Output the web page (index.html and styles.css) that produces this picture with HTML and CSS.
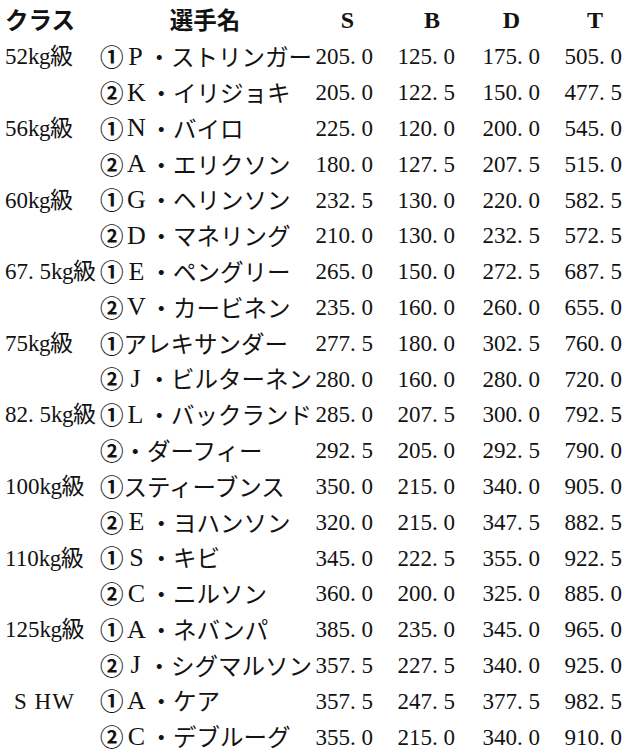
FILE: index.html
```html
<!DOCTYPE html>
<html lang="ja">
<head>
<meta charset="utf-8">
<title>結果</title>
<link rel="stylesheet" href="styles.css">
</head>
<body>
<div class="table">
  <div class="cell hcls">クラス</div>
  <div class="cell hname">選手名</div>
  <div class="cell hnum hs">S</div>
  <div class="cell hnum hb">B</div>
  <div class="cell hnum hd">D</div>
  <div class="cell hnum ht">T</div>

  <div class="cell cls">52<span class="kg">kg</span>級</div>
  <div class="cell name"><span class="mk">①</span><span class="ini">P</span>・ストリンガー</div>
  <div class="cell num">205. 0</div><div class="cell num">125. 0</div><div class="cell num">175. 0</div><div class="cell num">505. 0</div>

  <div class="cell cls"></div>
  <div class="cell name"><span class="mk">②</span><span class="ini">K</span>・イリジョキ</div>
  <div class="cell num">205. 0</div><div class="cell num">122. 5</div><div class="cell num">150. 0</div><div class="cell num">477. 5</div>

  <div class="cell cls">56<span class="kg">kg</span>級</div>
  <div class="cell name"><span class="mk">①</span><span class="ini">N</span>・バイロ</div>
  <div class="cell num">225. 0</div><div class="cell num">120. 0</div><div class="cell num">200. 0</div><div class="cell num">545. 0</div>

  <div class="cell cls"></div>
  <div class="cell name"><span class="mk">②</span><span class="ini">A</span>・エリクソン</div>
  <div class="cell num">180. 0</div><div class="cell num">127. 5</div><div class="cell num">207. 5</div><div class="cell num">515. 0</div>

  <div class="cell cls">60<span class="kg">kg</span>級</div>
  <div class="cell name"><span class="mk">①</span><span class="ini">G</span>・ヘリンソン</div>
  <div class="cell num">232. 5</div><div class="cell num">130. 0</div><div class="cell num">220. 0</div><div class="cell num">582. 5</div>

  <div class="cell cls"></div>
  <div class="cell name"><span class="mk">②</span><span class="ini">D</span>・マネリング</div>
  <div class="cell num">210. 0</div><div class="cell num">130. 0</div><div class="cell num">232. 5</div><div class="cell num">572. 5</div>

  <div class="cell cls">67. 5<span class="kg">kg</span>級</div>
  <div class="cell name"><span class="mk">①</span><span class="ini">E</span>・ペングリー</div>
  <div class="cell num">265. 0</div><div class="cell num">150. 0</div><div class="cell num">272. 5</div><div class="cell num">687. 5</div>

  <div class="cell cls"></div>
  <div class="cell name"><span class="mk">②</span><span class="ini">V</span>・カービネン</div>
  <div class="cell num">235. 0</div><div class="cell num">160. 0</div><div class="cell num">260. 0</div><div class="cell num">655. 0</div>

  <div class="cell cls">75<span class="kg">kg</span>級</div>
  <div class="cell name"><span class="mk">①</span>アレキサンダー</div>
  <div class="cell num">277. 5</div><div class="cell num">180. 0</div><div class="cell num">302. 5</div><div class="cell num">760. 0</div>

  <div class="cell cls"></div>
  <div class="cell name"><span class="mk">②</span><span class="ini">J</span>・ビルターネン</div>
  <div class="cell num">280. 0</div><div class="cell num">160. 0</div><div class="cell num">280. 0</div><div class="cell num">720. 0</div>

  <div class="cell cls">82. 5<span class="kg">kg</span>級</div>
  <div class="cell name"><span class="mk">①</span><span class="ini">L</span>・バックランド</div>
  <div class="cell num">285. 0</div><div class="cell num">207. 5</div><div class="cell num">300. 0</div><div class="cell num">792. 5</div>

  <div class="cell cls"></div>
  <div class="cell name"><span class="mk">②</span>・ダーフィー</div>
  <div class="cell num">292. 5</div><div class="cell num">205. 0</div><div class="cell num">292. 5</div><div class="cell num">790. 0</div>

  <div class="cell cls">100<span class="kg">kg</span>級</div>
  <div class="cell name"><span class="mk">①</span>スティーブンス</div>
  <div class="cell num">350. 0</div><div class="cell num">215. 0</div><div class="cell num">340. 0</div><div class="cell num">905. 0</div>

  <div class="cell cls"></div>
  <div class="cell name"><span class="mk">②</span><span class="ini">E</span>・ヨハンソン</div>
  <div class="cell num">320. 0</div><div class="cell num">215. 0</div><div class="cell num">347. 5</div><div class="cell num">882. 5</div>

  <div class="cell cls">110<span class="kg">kg</span>級</div>
  <div class="cell name"><span class="mk">①</span><span class="ini">S</span>・キビ</div>
  <div class="cell num">345. 0</div><div class="cell num">222. 5</div><div class="cell num">355. 0</div><div class="cell num">922. 5</div>

  <div class="cell cls"></div>
  <div class="cell name"><span class="mk">②</span><span class="ini">C</span>・ニルソン</div>
  <div class="cell num">360. 0</div><div class="cell num">200. 0</div><div class="cell num">325. 0</div><div class="cell num">885. 0</div>

  <div class="cell cls">125<span class="kg">kg</span>級</div>
  <div class="cell name"><span class="mk">①</span><span class="ini">A</span>・ネバンパ</div>
  <div class="cell num">385. 0</div><div class="cell num">235. 0</div><div class="cell num">345. 0</div><div class="cell num">965. 0</div>

  <div class="cell cls"></div>
  <div class="cell name"><span class="mk">②</span><span class="ini">J</span>・シグマルソン</div>
  <div class="cell num">357. 5</div><div class="cell num">227. 5</div><div class="cell num">340. 0</div><div class="cell num">925. 0</div>

  <div class="cell cls shw">S HW</div>
  <div class="cell name"><span class="mk">①</span><span class="ini">A</span>・ケア</div>
  <div class="cell num">357. 5</div><div class="cell num">247. 5</div><div class="cell num">377. 5</div><div class="cell num">982. 5</div>

  <div class="cell cls"></div>
  <div class="cell name"><span class="mk">②</span><span class="ini">C</span>・デブルーグ</div>
  <div class="cell num">355. 0</div><div class="cell num">215. 0</div><div class="cell num">340. 0</div><div class="cell num">910. 0</div>
</div>
</body>
</html>
```

FILE: styles.css
```css
html, body {
  margin: 0;
  padding: 0;
  background: #ffffff;
}

body {
  color: #121212;
  font-family: "Liberation Serif", "Noto Sans CJK JP", serif;
  font-size: 23px;
}

.table {
  display: grid;
  grid-template-columns: 95px 212px 61px 82px 85px 82px;
  grid-template-rows: 38px;
  grid-auto-rows: 35.8px;
  padding-left: 5px;
  padding-top: 1px;
}

.cell {
  display: flex;
  align-items: center;
  white-space: nowrap;
  line-height: 1;
}

.hcls {
  font-family: "Noto Sans CJK JP", sans-serif;
  font-weight: 700;
  font-size: 23.5px;
}

.hname {
  font-family: "Noto Sans CJK JP", sans-serif;
  font-weight: 700;
  font-size: 23.5px;
  justify-content: center;
  padding-right: 2px;
}

.hnum {
  font-family: "Liberation Serif", serif;
  font-weight: 700;
  font-size: 24px;
  justify-content: flex-end;
}

.hs { padding-right: 19px; }
.hb { padding-right: 15px; }
.hd { padding-right: 20px; }
.ht { padding-right: 19px; }

.cls {
  font-family: "Liberation Serif", "Noto Sans CJK JP", serif;
}

.cls .kg {
  letter-spacing: -0.5px;
}

.shw {
  padding-left: 9px;
  letter-spacing: 1px;
}

.name {
  font-family: "Noto Sans CJK JP", sans-serif;
  font-size: 23.5px;
}

.mk {
  display: inline-block;
  width: 1em;
  text-align: center;
  font-weight: 700;
}

.ini {
  display: inline-block;
  width: 1em;
  text-align: center;
  font-family: "Liberation Serif", serif;
  font-size: 26px;
  line-height: 1;
}

.num {
  justify-content: flex-end;
  font-family: "Liberation Serif", serif;
}
```
